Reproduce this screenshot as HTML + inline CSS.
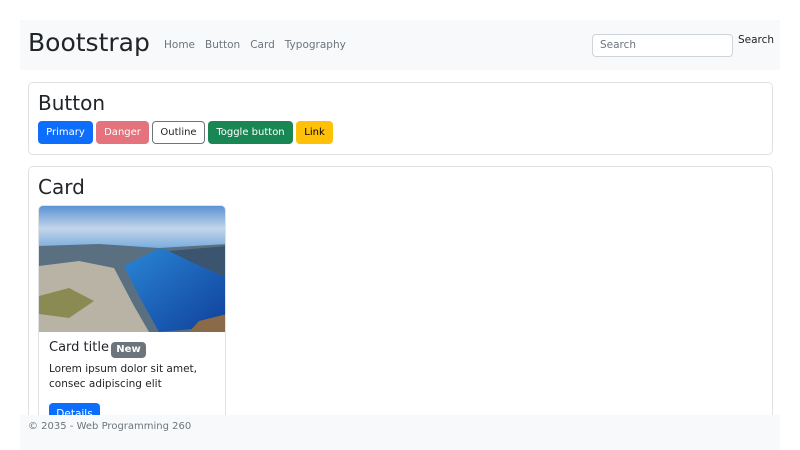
<!DOCTYPE html>
<html style="overflow:hidden;height:450px"><head><style>
*{box-sizing:border-box;margin:0;padding:0}
body{width:800px;height:450px;overflow:hidden;background:#fff;font-family:"DejaVu Sans","Liberation Sans",sans-serif;color:#212529;position:relative}
.a{position:absolute;white-space:nowrap}
.nav{left:20px;top:20px;width:760px;height:50px;background:#f8f9fa}
.btn{position:absolute;top:121px;height:23px;border-radius:4px;font-size:10px;line-height:23px;text-align:center;color:#fff}
.box{border:1px solid #dee2e6;border-radius:5px;background:#fff}
</style></head><body>
<div class="a nav"></div>
<div class="a" style="left:28px;top:28px;font-size:25px;color:#212529">Bootstrap</div>
<div class="a" style="left:164px;top:39px;font-size:10.5px;color:#6c757d">Home&nbsp;&nbsp; Button&nbsp;&nbsp; Card&nbsp;&nbsp; Typography</div>
<div class="a" style="left:592px;top:34px;width:141px;height:23px;border:1px solid #ced4da;border-radius:4px;background:#fff;font-size:10.5px;color:#6c757d;padding:4px 7px">Search</div>
<div class="a" style="left:738px;top:34px;font-size:10.5px">Search</div>

<div class="a box" style="left:28px;top:82px;width:745px;height:73px"></div>
<div class="a" style="left:38px;top:91px;font-size:20px">Button</div>
<div class="btn" style="left:38px;width:55px;background:#0d6efd">Primary</div>
<div class="btn" style="left:96px;width:53px;background:#e4737e">Danger</div>
<div class="btn" style="left:152px;width:53px;border:1px solid #6c757d;color:#212529;line-height:21px">Outline</div>
<div class="btn" style="left:208px;width:85px;background:#198754">Toggle button</div>
<div class="btn" style="left:296px;width:37px;background:#ffc107;color:#000">Link</div>

<div class="a box" style="left:28px;top:166px;width:745px;height:300px"></div>
<div class="a" style="left:38px;top:175px;font-size:20px">Card</div>
<div class="a box" style="left:38px;top:205px;width:188px;height:260px;overflow:hidden">
<svg width="188" height="126" viewBox="0 0 188 126" style="display:block">
<defs><linearGradient id="s" x1="0" y1="0" x2="0" y2="1"><stop offset="0" stop-color="#5b93d4"/><stop offset=".5" stop-color="#c3d5ea"/><stop offset="1" stop-color="#6fa7dc"/></linearGradient>
<linearGradient id="w" x1="0" y1="0" x2="1" y2="1"><stop offset="0" stop-color="#2a86d6"/><stop offset="1" stop-color="#0f3f9a"/></linearGradient></defs>
<rect width="188" height="45" fill="url(#s)"/>
<path d="M0 40 L60 38 L120 42 L188 38 L188 126 L0 126Z" fill="#5a6f80"/>
<path d="M85 60 L120 42 L150 50 L188 72 L188 120 L120 126 L100 90Z" fill="url(#w)"/>
<path d="M130 45 L188 40 L188 72 L150 55Z" fill="#3b5570"/>
<path d="M0 60 L40 55 L75 62 L95 100 L110 126 L0 126Z" fill="#b9b3a6"/>
<path d="M0 90 L30 82 L55 95 L30 112 L0 108Z" fill="#8a8a52"/>
<path d="M160 115 L188 108 L188 126 L150 126Z" fill="#8a6a48"/>
</svg>
</div>
<div class="a" style="left:49px;top:340px;font-size:13px">Card title</div>
<div class="a" style="left:111px;top:342px;width:35px;height:16px;background:#6c757d;border-radius:4px;color:#fff;font-size:10px;font-weight:bold;text-align:center;line-height:16px">New</div>
<div class="a" style="left:49px;top:362px;font-size:10.5px;line-height:15px">Lorem ipsum dolor sit amet,<br>consec adipiscing elit</div>
<div class="a" style="left:49px;top:403px;width:51px;height:23px;background:#0d6efd;border-radius:4px;color:#fff;font-size:10.5px;text-align:center;line-height:22px">Details</div>

<div class="a" style="left:20px;top:415px;width:760px;height:35px;background:#f8f9fa"></div>
<div class="a" style="left:28px;top:421px;font-size:10px;color:#6c757d">© 2035 - Web Programming 260</div>
</body></html>
